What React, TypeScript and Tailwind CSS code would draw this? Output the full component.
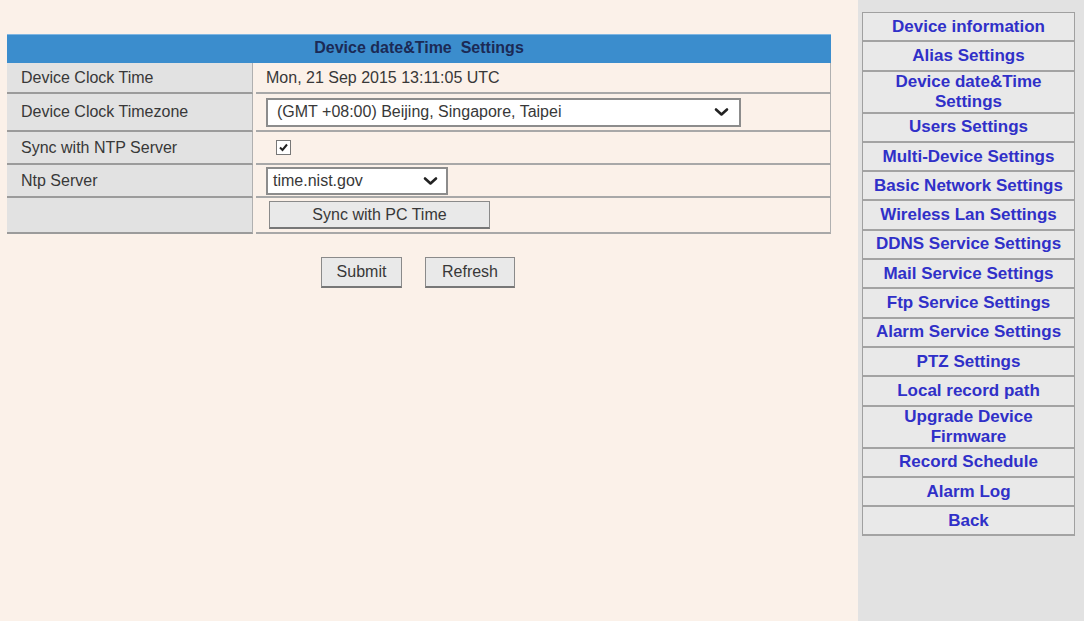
import React from "react";

const menu: { label: string; lines?: string[] }[] = [
  { label: "Device information" },
  { label: "Alias Settings" },
  { label: "Device date&Time Settings", lines: ["Device date&Time", "Settings"] },
  { label: "Users Settings" },
  { label: "Multi-Device Settings" },
  { label: "Basic Network Settings" },
  { label: "Wireless Lan Settings" },
  { label: "DDNS Service Settings" },
  { label: "Mail Service Settings" },
  { label: "Ftp Service Settings" },
  { label: "Alarm Service Settings" },
  { label: "PTZ Settings" },
  { label: "Local record path" },
  { label: "Upgrade Device Firmware", lines: ["Upgrade Device", "Firmware"] },
  { label: "Record Schedule" },
  { label: "Alarm Log" },
  { label: "Back" },
];

function Chevron() {
  return (
    <svg width="15" height="10" viewBox="0 0 15 10" className="shrink-0">
      <path d="M2 2.5 L7.5 7.5 L13 2.5" fill="none" stroke="#222" strokeWidth="2.6" strokeLinecap="round" strokeLinejoin="round" />
    </svg>
  );
}

function Row({ label, height, children }: { label: string; height: string; children?: React.ReactNode }) {
  return (
    <div className={`flex gap-[3px] ${height}`}>
      <div className="flex w-[246px] items-center border-b-2 border-r border-b-[#9b9b9b] border-r-[#b0b0b0] bg-[#e2e2e2] pl-[14px]">
        {label}
      </div>
      <div className="flex flex-1 items-center border-b-2 border-r border-b-[#a8a8a8] border-r-[#b0b0b0] pl-[10px]">
        {children}
      </div>
    </div>
  );
}

export default function App() {
  return (
    <div
      className="flex h-[621px] w-[1084px] overflow-hidden text-[16px] text-[#383838]"
      style={{ fontFamily: '"Liberation Sans", Arial, sans-serif' }}
    >
      <main className="w-[858px] bg-[#fbf1e9] pl-[7px] pt-[34px]">
        <div className="w-[824px]">
          <div className="flex h-[29px] items-center justify-center border-t border-[#7fb6e2] bg-[#3b8dcd] pb-[3px] font-bold text-[#1b2a55]">
            Device date&amp;Time&nbsp; Settings
          </div>
          <Row label="Device Clock Time" height="h-[31px]">
            Mon, 21 Sep 2015 13:11:05 UTC
          </Row>
          <Row label="Device Clock Timezone" height="h-[38px]">
            <div className="flex h-[29px] w-[475px] items-center justify-between border-2 border-[#8c8c8c] bg-white pl-[9px] pr-[10px]">
              <span>(GMT +08:00) Beijing, Singapore, Taipei</span>
              <Chevron />
            </div>
          </Row>
          <Row label="Sync with NTP Server" height="h-[33px]">
            <div className="ml-[10px] flex h-[15px] w-[15px] items-center justify-center border border-[#777] bg-white">
              <svg width="11" height="11" viewBox="0 0 11 11">
                <path d="M2 5.5 L4.5 8 L9 2.5" fill="none" stroke="#222" strokeWidth="2" />
              </svg>
            </div>
          </Row>
          <Row label="Ntp Server" height="h-[33px]">
            <div className="flex h-[28px] w-[182px] items-center justify-between border-2 border-[#8c8c8c] bg-white pl-[5px] pr-[8px]">
              <span>time.nist.gov</span>
              <Chevron />
            </div>
          </Row>
          <Row label="" height="h-[36px]">
            <button
              type="button"
              className="ml-[3px] h-[28px] w-[221px] border border-b-2 border-[#8a8a8a] border-b-[#777] bg-[#e9e9e9] text-[16px] text-[#383838]"
            >
              Sync with PC Time
            </button>
          </Row>
          <div className="mt-[23px] flex justify-center gap-[23px] pr-[2px]">
            <button
              type="button"
              className="h-[31px] w-[81px] border border-b-2 border-[#8a8a8a] border-b-[#777] bg-[#e9e9e9] text-[#383838]"
            >
              Submit
            </button>
            <button
              type="button"
              className="h-[31px] w-[90px] border border-b-2 border-[#8a8a8a] border-b-[#777] bg-[#e9e9e9] text-[#383838]"
            >
              Refresh
            </button>
          </div>
        </div>
      </main>
      <aside className="flex-1 bg-[#e2e2e2] pl-[4px] pt-[12px]">
        <div className="w-[213px] border-t border-l border-r border-[#a0a0a0]">
          {menu.map((item) => (
            <div
              key={item.label}
              className={`flex flex-col items-center justify-center border-b-2 border-[#a3a3a3] bg-[#e9e9e9] text-center text-[17px] font-bold text-[#3030c8] ${
                item.lines ? "h-[42px] pt-[1px] leading-[20px]" : "h-[29.3px] leading-[20px]"
              }`}
            >
              {item.lines ? item.lines.map((l) => <span key={l}>{l}</span>) : item.label}
            </div>
          ))}
        </div>
      </aside>
    </div>
  );
}
